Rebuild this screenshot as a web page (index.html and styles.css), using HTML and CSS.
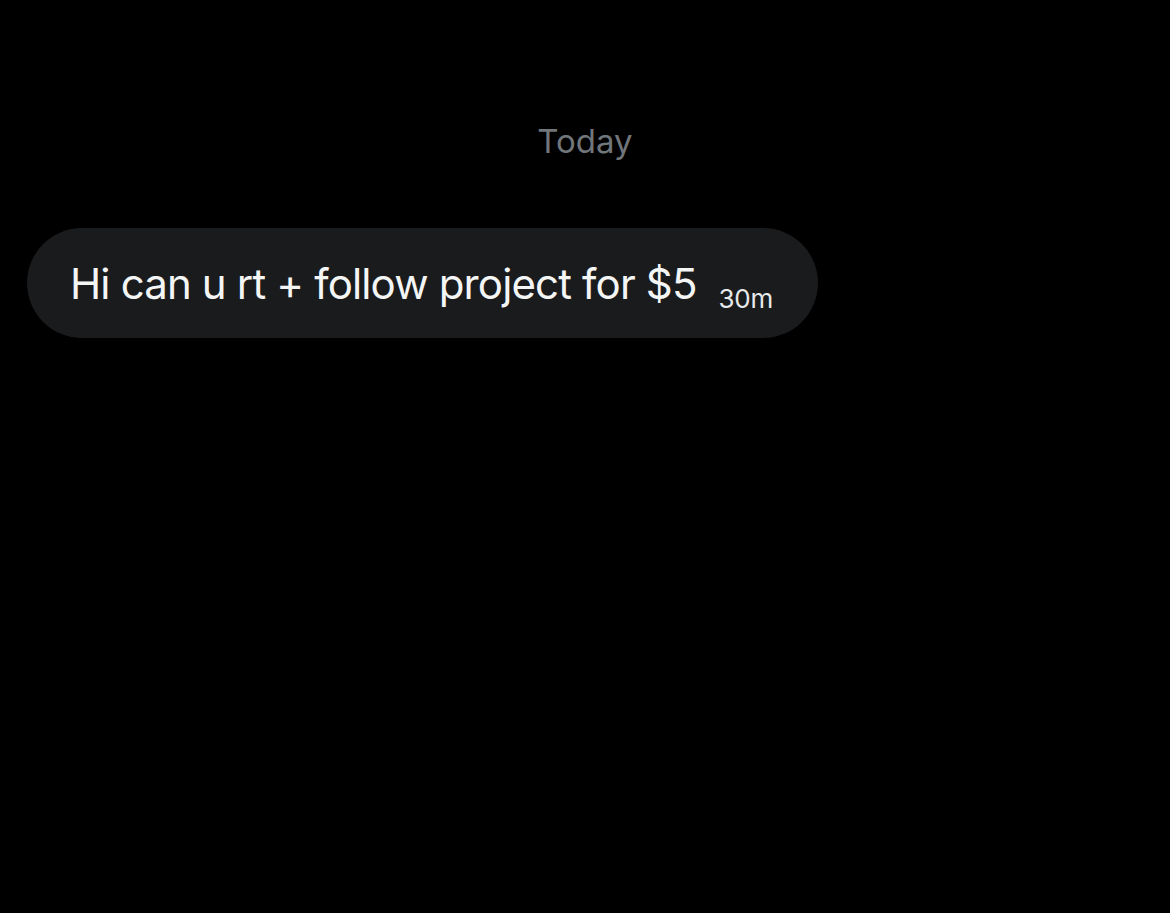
FILE: index.html
```html
<!DOCTYPE html>
<html lang="en">
<head>
    <meta charset="UTF-8">
    <meta name="viewport" content="width=device-width, initial-scale=1.0">
    <title>Messages</title>
    <link rel="stylesheet" href="styles.css">
</head>
<body>
    <div class="chat">
        <!-- Day divider -->
        <div class="day">Today</div>

        <!-- Incoming message -->
        <div class="row">
            <div class="bubble">
                <span class="text">Hi can u rt + follow project for $5</span>
                <span class="time">30m</span>
            </div>
        </div>
    </div>
</body>
</html>
```

FILE: styles.css
```css
body {
    margin: 0;
    padding: 0;
    background-color: #000;
    color: #e7e9ea;
    font-family: Inter, "Noto Sans", sans-serif;
    height: 100vh;
}

.chat {
    display: flex;
    flex-direction: column;
    padding: 118px 27px 0;
}

.day {
    text-align: center;
    color: #71767b;
    font-size: 33px;
    line-height: 46px;
}

.row {
    display: flex;
    margin-top: 64px;
}

.bubble {
    display: flex;
    align-items: baseline;
    gap: 22px;
    background-color: #1a1b1d;
    border-radius: 55px;
    height: 110px;
    box-sizing: border-box;
    padding: 1px 45px 0 43px;
    line-height: 110px;
}

.text {
    font-size: 42px;
    letter-spacing: -0.85px;
    color: #f4f5f5;
}

.time {
    font-size: 26px;
    letter-spacing: -0.3px;
    color: #e7e9ea;
    position: relative;
    top: 9px;
}
```
